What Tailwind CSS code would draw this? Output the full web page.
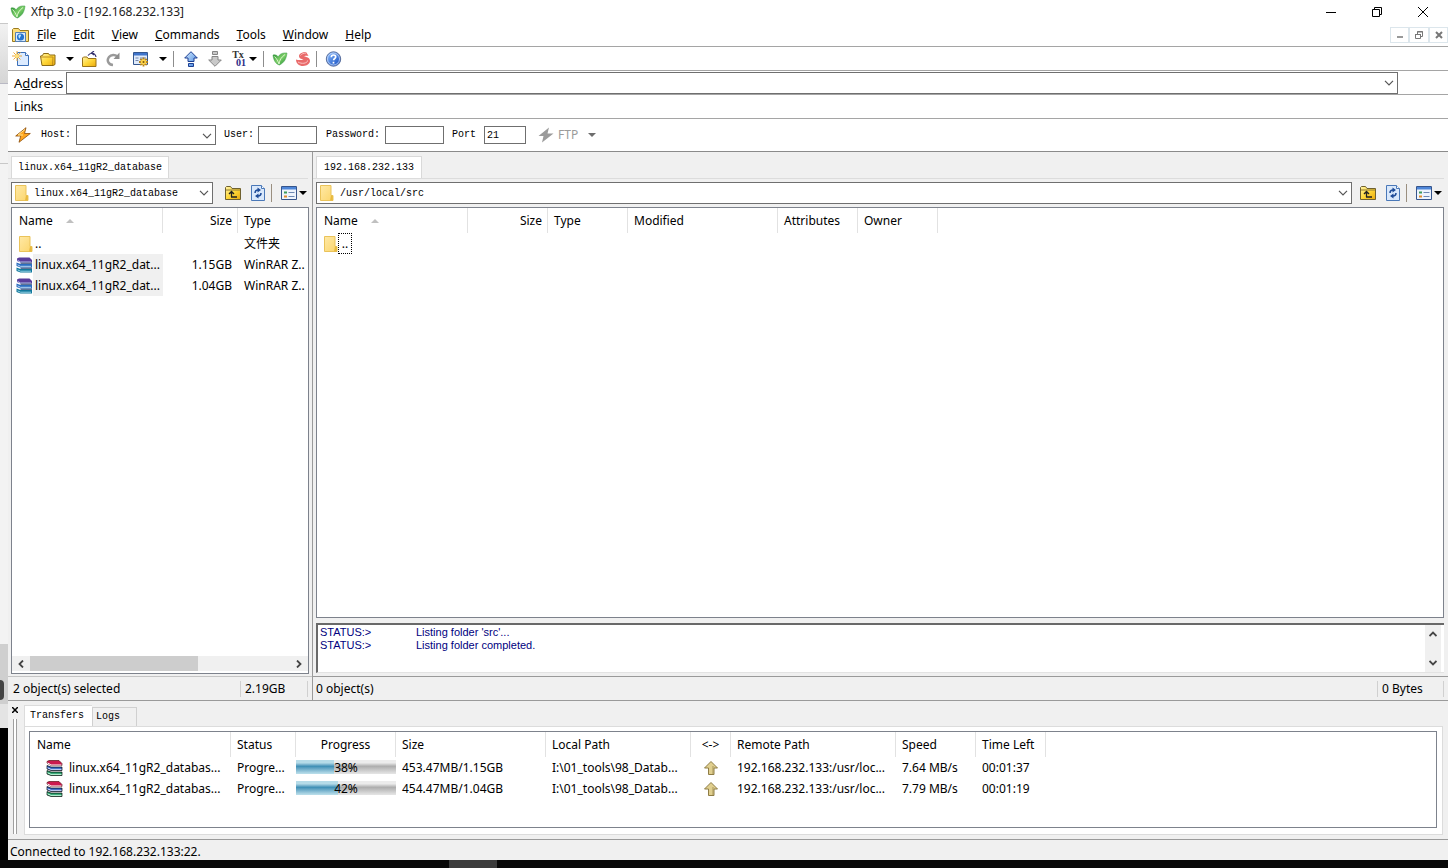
<!DOCTYPE html>
<html lang="en">
<head>
<meta charset="utf-8">
<title>Xftp 3.0 - [192.168.232.133]</title>
<script src="https://cdn.jsdelivr.net/npm/@tailwindcss/browser@4"></script>
</head>
<body class="bg-white">
<svg class="absolute h-0 w-0" aria-hidden="true">
  <defs>
    <linearGradient id="gFolder" x1="0" y1="0" x2="1" y2="1"><stop offset="0" stop-color="#fff3a8"/><stop offset=".5" stop-color="#ffd83a"/><stop offset="1" stop-color="#eaa90c"/></linearGradient>
    <linearGradient id="gPale" x1="0" y1="0" x2="1" y2="1"><stop offset="0" stop-color="#ffe9a6"/><stop offset="1" stop-color="#fbd56b"/></linearGradient>
    <linearGradient id="gBlue" x1="0" y1="0" x2="1" y2="1"><stop offset="0" stop-color="#d6ecff"/><stop offset="1" stop-color="#3f82dd"/></linearGradient>
    <linearGradient id="gLeaf" x1="0" y1="0" x2="1" y2="1"><stop offset="0" stop-color="#1f8a2c"/><stop offset=".5" stop-color="#7fd06a"/><stop offset="1" stop-color="#178a2e"/></linearGradient>
    <linearGradient id="gHelp" x1="0" y1="0" x2="1" y2="1"><stop offset="0" stop-color="#8ec0ff"/><stop offset="1" stop-color="#0d47bd"/></linearGradient>
    <symbol id="leaf" viewBox="0 0 16 16"><path d="M1 4c2-.6 4 0 5.300 2C7 3.500 10 1.500 15 2c-.6 5.500-2.500 9.500-7.500 12C3.500 13 1.500 9 1 4z" fill="url(#gLeaf)" stroke="#3c9a47" stroke-width=".5"/><path d="M7 13c.5-4 2.500-7 6-9.500M7 13C6 10 4.500 7.500 2.500 5.500" stroke="#d9f5c9" stroke-width="1" fill="none"/></symbol>
    <symbol id="chev" viewBox="0 0 10 6"><path d="M1 .8 5 4.800 9 .8" fill="none" stroke="#555" stroke-width="1.200"/></symbol>
    <symbol id="tri" viewBox="0 0 8 4"><path d="M0 0h8L4 4z" fill="currentColor"/></symbol>
    <symbol id="sort" viewBox="0 0 10 5"><path d="M5 0l5 5H0z" fill="#c0c0c0"/></symbol>
    <symbol id="pale" viewBox="0 0 14 16"><path d="M.5.500h10.500v10h2v5H.5z" fill="url(#gPale)" stroke="#eac35a"/><path d="M11 10.500l1.800.500v4.500H10z" fill="#e8b93e"/></symbol>
    <symbol id="upfolder" viewBox="0 0 16 16"><path d="M.5 14.500v-12l1-1h4l1.500 2h8.500v11z" fill="url(#gFolder)" stroke="#6f6130"/><path d="M1 5h14" stroke="#8f7a34"/><path d="M6 12h6M6.500 12V7M4 9l2.500-2.500L9 9" fill="none" stroke="#222" stroke-width="1.300"/></symbol>
    <symbol id="refresh" viewBox="0 0 14 16"><path d="M.5.500h10l3 3v12H.5z" fill="#d9e8fb" stroke="#4a78b8"/><path d="M10.500.500v3h3" fill="#fff" stroke="#4a78b8"/><path d="M6.500 2.500l3.500 2.500-3.500 2.500zM7.500 8.500l-3.500 2.500 3.500 2.500z" fill="#1d4a97"/><path d="M4 8c0-2 1-3 3-3M10 8c0 2-1 3-3 3" fill="none" stroke="#1d4a97" stroke-width="1.500"/></symbol>
    <symbol id="view" viewBox="0 0 16 14"><path d="M.5.500h15v13H.5z" fill="#eef4fd" stroke="#36558c"/><path d="M1 1h14v2.500H1z" fill="#4e86d8"/><path d="M3 5.500h3v2H3z" fill="#3c9a5a"/><path d="M3 9.500h3v2H3z" fill="#e08a2a"/><path d="M7.500 6.500h6M7.500 10.500h6" stroke="#6d88b3"/></symbol>
    <symbol id="booksBlue" viewBox="0 0 17 16"><path d="M1 1.500 3 .5h10.500L16 3v2.500H4.500L1 4z" fill="#5a3d9c"/><path d="M1.500 3.300 4.500 5H15" fill="none" stroke="#aebfe8"/><path d="M.5 5.500 4.500 7H16v3.500H4.500L.5 9z" fill="#2a6cc0"/><path d="M1.500 7.800 4.500 9.300H15" fill="none" stroke="#b4d8f2"/><path d="M.5 10.500 4.500 12H16v3.500H4.500L.5 14z" fill="#11789c"/><path d="M1.500 12.800 4.500 14.200H15" stroke="#9ad4e6" fill="none"/><path d="M4.500 6.200H16M4.500 11.200H16" stroke="#173468"/></symbol>
    <symbol id="books" viewBox="0 0 17 16"><path d="M1 1.500 3 .5h10L16 3.500v2H5L1 3z" fill="#cb1a4f" stroke="#400" stroke-width=".6"/><path d="M1.500 2.800 5 5h10.500" fill="none" stroke="#fff"/><path d="M1 5.500 5 7h11v3.500H5L1 9z" fill="#2458bb" stroke="#111" stroke-width=".7"/><path d="M1.500 7.800 5 9.300h10.500" stroke="#dfe6ff" fill="none"/><path d="M1 10.500 5 12h11v3.500H5L1 14z" fill="#1a9862" stroke="#111" stroke-width=".7"/><path d="M1.500 12.800 5 14.300h10.500" stroke="#d6ffe6" fill="none"/></symbol>
    <symbol id="goldup" viewBox="0 0 14 14"><path d="M7 .5 13.500 7H10v6.500H4.500V7H.5z" fill="#e0cf8f" stroke="#8e7c45"/><path d="M9 5v8" stroke="#a8955a"/></symbol>
    <symbol id="bolt" viewBox="0 0 16 16"><path d="M11 .5 .5 9h5L4 15.500 15.500 6.500H9.500z" fill="currentColor"/></symbol>
  </defs>
</svg>

<div class="flex min-h-screen flex-col bg-black font-['Noto_Sans','Noto_Sans_CJK_SC',sans-serif] text-xs leading-4 text-black">
 <div class="flex flex-1">
  <!-- sliver of the window behind -->
  <div class="flex w-2 shrink-0 flex-col bg-[#f3f3f3]">
    <div class="h-6 border-b border-[#c8c8c8] bg-white"></div>
    <div class="h-15 border-b border-[#b9b9c4] bg-linear-to-b from-[#f2f2f2] to-[#d5d5d5]"></div>
    <div class="h-20 border-b border-[#c8c8c8]"></div>
    <div class="flex-1"></div>
    <div class="flex h-15 items-center overflow-hidden bg-[#cfcfcf]"><span class="mt-8 h-5 w-1 rounded-r-full bg-[#444]"></span></div>
    <div class="h-6 bg-[#e4e4e4]"></div>
    <div class="h-[132px] bg-black"></div>
  </div>

  <div class="flex min-w-0 flex-1 flex-col bg-[#f0f0f0]">
   <header class="bg-white">
    <div class="flex h-[23px] items-center pl-0.5">
      <svg class="h-4 w-4"><use href="#leaf"/></svg>
      <h1 class="ml-[5px] flex-1 text-[#222]">Xftp 3.0 - [192.168.232.133]</h1>
      <button aria-label="Minimize" class="flex h-5 w-[46px] items-center justify-center"><svg class="h-2.5 w-2.5" viewBox="0 0 10 10"><path d="M0 5.500h10" stroke="#000"/></svg></button>
      <button aria-label="Restore" class="flex h-5 w-[46px] items-center justify-center"><svg class="h-2.5 w-2.5" viewBox="0 0 10 10" fill="none" stroke="#000"><path d="M.5 2.500h7v7h-7zM2.500 2.500v-2h7v7h-2"/></svg></button>
      <button aria-label="Close" class="flex h-5 w-[46px] items-center justify-center"><svg class="h-2.5 w-2.5" viewBox="0 0 10 10"><path d="M0 0l10 10M10 0L0 10" stroke="#000"/></svg></button>
      <span class="w-0.5"></span>
    </div>
    <nav class="flex h-6 items-center border-b border-[#a5a5a5] pl-1">
      <svg class="h-4 w-[17px]" viewBox="0 0 17 16"><path d="M.5 14.500v-12l1-1h5l1.500 2h8.500v11z" fill="#ffdf7a" stroke="#9a7a20"/><path d="M3.500 5.500h10v9h-10z" fill="#dcebfb" stroke="#5580b4"/><circle cx="8.500" cy="10" r="3.600" fill="#2574d0"/><path d="M6.500 8.500c1-1.500 2.500-1 2.500 0s-1.500 1.500-1 3c-1 0-1.800-1.500-1.500-3z" fill="#bfe6ff"/></svg>
      <div class="ml-2 flex flex-1 gap-[17px]">
        <button><u>F</u>ile</button><button><u>E</u>dit</button><button><u>V</u>iew</button><button><u>C</u>ommands</button><button><u>T</u>ools</button><button><u>W</u>indow</button><button><u>H</u>elp</button>
      </div>
      <div class="flex">
        <button aria-label="Minimize document" class="flex h-4 w-[19px] items-center justify-center border border-[#dce6ec]"><svg class="h-2 w-2" viewBox="0 0 8 8"><path d="M1 6h6" stroke="#777" stroke-width="1.500"/></svg></button>
        <button aria-label="Restore document" class="flex h-4 w-5 items-center justify-center border border-[#dce6ec]"><svg class="h-2 w-2" viewBox="0 0 8 8" fill="none" stroke="#777"><path d="M.5 3.500h5v4h-5zM2.500 3V.500h5v5H6M0 3.500h6M2 1h6"/></svg></button>
        <button aria-label="Close document" class="flex h-4 w-[19px] items-center justify-center border border-[#dce6ec]"><svg class="h-2 w-2" viewBox="0 0 8 8"><path d="M1 1l6 6M7 1L1 7" stroke="#777" stroke-width="2"/></svg></button>
      </div>
    </nav>

    <div class="flex h-6 items-center border-b border-[#a5a5a5] pl-1" role="toolbar" aria-label="Main">
      <button aria-label="New"><svg class="h-4 w-[17px]" viewBox="0 0 17 16"><path d="M5.500 1.500h8l3 3v10h-11z" fill="#dcebff" stroke="#3a6fb8"/><path d="M13.500 1.500v3h3" fill="#fff" stroke="#3a6fb8"/><path d="M5 0v10M0 5h10M1.500 1.500l7 7M8.500 1.500l-7 7" stroke="#eaa838"/><circle cx="5" cy="5" r="2" fill="#ffe07a"/></svg></button>
      <button aria-label="Open" class="ml-[11px]"><svg class="h-4 w-4" viewBox="0 0 16 16"><path d="M.5 5l2-.5 1-2h5l1 1.500h5.500v9.500l-2 1H2z" fill="url(#gFolder)" stroke="#8c6b16"/><path d="M1 6h12l-.5 8" fill="none" stroke="#c08e1c"/></svg></button>
      <button aria-label="Open list" class="ml-2.5"><svg class="h-1 w-2"><use href="#tri"/></svg></button>
      <button aria-label="Open session folder" class="ml-2"><svg class="h-4 w-4" viewBox="0 0 16 16"><path d="M.5 15.500V7l1-1h3.500l1 1.500h8v8z" fill="url(#gFolder)" stroke="#9a7318"/><path d="M6 4.500C8 1.500 13 1 14 6M12 0l-2.500 2L12 4" fill="none" stroke="#33306e" stroke-width="1.200"/></svg></button>
      <button aria-label="Reconnect" class="ml-2"><svg class="h-4 w-4" viewBox="0 0 16 16"><path d="M7 14C2 13.500.5 9 3 6c2-2.500 6-2.500 8.500-.5" fill="none" stroke="#9a9a9a" stroke-width="2.500"/><path d="M13.500 1.500V8H7.500z" fill="#8e8e8e"/></svg></button>
      <button aria-label="Properties" class="ml-[11px]"><svg class="h-4 w-4" viewBox="0 0 16 16"><path d="M.5 1.500h14v12H.5z" fill="#dfeafa" stroke="#34568f"/><path d="M1 2h13v2.500H1z" fill="#3f74cb"/><path d="M2.500 7h3M7 7h6M2.500 9.500h3" stroke="#7386ad"/><path d="M10.500 6.500v9M6 11h9M7.300 7.800l6.400 6.400M13.700 7.800l-6.400 6.400" stroke="#b3801a" stroke-width="1.800"/><circle cx="10.500" cy="11" r="2.700" fill="#ffd348"/><circle cx="10.500" cy="11" r="1" fill="#7a5b10"/></svg></button>
      <button aria-label="Properties list" class="ml-2.5"><svg class="h-1 w-2"><use href="#tri"/></svg></button>
      <span class="ml-1.5 h-4 w-px bg-[#8d8d8d]"></span>
      <button aria-label="Upload" class="ml-2.5"><svg class="h-4 w-3.5" viewBox="0 0 14 16"><path d="M7 .7 13.300 7H10v3.500H4V7H.7zM4.500 12.500h5v3h-5z" fill="url(#gBlue)" stroke="#1c3f93"/></svg></button>
      <button aria-label="Download" class="ml-2.5"><svg class="h-4 w-3.5" viewBox="0 0 14 16"><path d="M4.500.5h5v3h-5zM4 5.500h6V9h3.300L7 15.300.7 9H4z" fill="#c9c9c9" stroke="#858585"/></svg></button>
      <button aria-label="Transfer mode" class="ml-2 flex h-4 w-4 flex-col font-['Liberation_Serif',serif] text-[10px] leading-2 font-bold"><span class="text-[#333]">Tx</span><span class="self-end text-[#2a2a86]">01</span></button>
      <button aria-label="Transfer mode list" class="ml-[3px]"><svg class="h-1 w-2"><use href="#tri"/></svg></button>
      <span class="ml-1.5 h-4 w-px bg-[#8d8d8d]"></span>
      <button aria-label="Xftp" class="ml-2"><svg class="h-4 w-4"><use href="#leaf"/></svg></button>
      <button aria-label="Xshell" class="ml-[7px]"><svg class="h-4 w-4" viewBox="0 0 16 16"><path d="M11 1c-4 0-7 1.800-7 4.200 0 2 2 2.800 4.500 3.300C5.500 9.500 3 9 1 8.500c0 4 3 6.500 7 6.500 4.500 0 7-2.500 7-5.200C15 7 12 6 9 5.200c1.500-.7 3-.5 4.500-.5z" fill="#e96a6a"/><path d="M3 11c4 2.500 10 1 9.500-1.500M5.500 4.500C6.500 3 8.500 2 11 2" stroke="#fbc4c4" stroke-width="1" fill="none"/></svg></button>
      <span class="ml-[5px] h-4 w-px bg-[#8d8d8d]"></span>
      <button aria-label="Help" class="ml-2"><svg class="h-4 w-[17px]" viewBox="0 0 17 16"><circle cx="8.500" cy="8" r="7.200" fill="url(#gHelp)" stroke="#5a6f9c"/><circle cx="8.500" cy="8" r="6" fill="none" stroke="#dbe8ff" stroke-width=".7"/><path d="M6.300 6.200c0-3 4.600-2.800 4.400-.2-.1 1.500-2.100 1.500-2.100 3.300M8.500 10.800v1.700" stroke="#fff" stroke-width="1.700" fill="none"/></svg></button>
    </div>

    <div class="flex h-6 items-center border-b border-[#a5a5a5] pl-1.5">
      <label for="addr" class="w-[52px] text-[13px]">A<u>d</u>dress</label>
      <div class="relative mr-[50px] flex-1">
        <select id="addr" class="block h-[22px] w-full appearance-none border border-[#6f6f6f] bg-white"><option></option></select>
        <svg class="pointer-events-none absolute top-2 right-1 h-1.5 w-2.5"><use href="#chev"/></svg>
      </div>
    </div>
    <div class="flex h-6 items-center border-b border-[#a5a5a5] pl-1.5">Links</div>

    <form class="flex h-[33px] items-center border-b border-[#8b8b8b] pl-[7px] font-['Liberation_Mono',monospace] text-[10px]">
      <svg class="mr-2.5 h-4 w-4" viewBox="0 0 16 16"><path d="M11 .7.700 9h5L4 15.300 15.300 6.500H9.500z" fill="#ffa51e" stroke="#8a4a08" stroke-width=".8"/><path d="M10 2.500 3 8h5" stroke="#ffe08a" fill="none"/></svg>
      <label for="host" class="w-[35px]">Host:</label>
      <div class="relative w-[140px]">
        <select id="host" class="block h-5 w-full appearance-none border border-[#6f6f6f] bg-white"><option></option></select>
        <svg class="pointer-events-none absolute top-2 right-1 h-1.5 w-2.5"><use href="#chev"/></svg>
      </div>
      <label for="user" class="ml-2 w-[34px]">User:</label><input id="user" class="h-[18px] w-[59px] border border-[#6f6f6f] bg-white">
      <label for="pass" class="ml-[9px] w-[59px]">Password:</label><input id="pass" type="password" class="h-[18px] w-[59px] border border-[#6f6f6f] bg-white">
      <label for="port" class="ml-2 w-8">Port</label><input id="port" value="21" class="h-[18px] w-[42px] border border-[#6f6f6f] bg-white px-0.5">
      <button type="button" class="ml-3 flex items-center gap-1 font-['Noto_Sans',sans-serif] text-xs text-[#9b9b9b]"><svg class="h-4 w-4"><use href="#bolt"/></svg>FTP<svg class="ml-1.5 h-1 w-2 text-[#6d6d6d]"><use href="#tri"/></svg></button>
    </form>
   </header>

   <main class="flex flex-1 border-b border-[#9a9a9a]">
    <!-- local pane -->
    <section class="flex w-[305px] shrink-0 flex-col border-r border-[#9a9a9a]" aria-label="Local">
      <div class="mr-1 flex border-b border-[#dcdcdc] pt-1 pl-[3px]"><button class="h-[22px] border-x border-t border-[#d9d9d9] bg-white px-1.5 font-['Liberation_Mono',monospace] text-[10px]">linux.x64_11gR2_database</button></div>
      <div class="flex items-center py-[3px] pl-[3px]">
        <div class="relative w-[202px]">
          <select aria-label="Local folder" class="block h-[22px] w-full appearance-none border border-[#6f6f6f] bg-white pt-0.5 pl-[22px] font-['Liberation_Mono',monospace] text-[10px]"><option>linux.x64_11gR2_database</option></select>
          <svg class="pointer-events-none absolute top-[3px] left-1 h-4 w-3.5"><use href="#pale"/></svg>
          <svg class="pointer-events-none absolute top-2 right-1 h-1.5 w-2.5"><use href="#chev"/></svg>
        </div>
        <button aria-label="Up" class="ml-3"><svg class="h-4 w-4"><use href="#upfolder"/></svg></button>
        <button aria-label="Refresh" class="ml-2.5"><svg class="h-4 w-3.5"><use href="#refresh"/></svg></button>
        <span class="ml-1.5 h-[18px] w-px bg-[#9a8f80]"></span>
        <button aria-label="View" class="ml-[9px] flex items-center gap-0.5"><svg class="h-3.5 w-4"><use href="#view"/></svg><svg class="h-1 w-2"><use href="#tri"/></svg></button>
      </div>
      <div class="mr-[3px] ml-[3px] flex flex-1 flex-col overflow-hidden border border-[#7d828c] bg-white">
        <table class="w-full table-fixed border-separate border-spacing-0 text-left">
          <colgroup><col class="w-[151px]"><col class="w-[75px]"><col></colgroup>
          <thead><tr class="h-[25px]">
            <th class="border-r border-[#e2e2e2] pl-[7px] font-normal"><span class="flex items-center gap-3">Name<svg class="h-1 w-2.5"><use href="#sort"/></svg></span></th>
            <th class="border-r border-[#e2e2e2] pr-[5px] text-right font-normal">Size</th><th class="pl-1.5 font-normal">Type</th></tr></thead>
          <tbody class="whitespace-nowrap">
            <tr class="h-[21px]"><td><span class="flex items-center gap-0.5 pl-[7px]"><svg class="h-4 w-3.5"><use href="#pale"/></svg>..</span></td><td></td><td class="pl-1.5">文件夹</td></tr>
            <tr class="h-[21px]"><td><span class="flex items-center pl-1"><svg class="h-4 w-[17px]"><use href="#booksBlue"/></svg><span class="flex h-[21px] flex-1 items-center bg-[#f0f0f0] pl-0.5">linux.x64_11gR2_dat...</span></span></td><td class="pr-1.5 text-right">1.15GB</td><td class="pl-1.5">WinRAR Z..</td></tr>
            <tr class="h-[21px]"><td><span class="flex items-center pl-1"><svg class="h-4 w-[17px]"><use href="#booksBlue"/></svg><span class="flex h-[21px] flex-1 items-center bg-[#f0f0f0] pl-0.5">linux.x64_11gR2_dat...</span></span></td><td class="pr-1.5 text-right">1.04GB</td><td class="pl-1.5">WinRAR Z..</td></tr>
          </tbody>
        </table>
        <div class="flex-1"></div>
        <div class="mb-0.5 flex h-[15px] items-center bg-[#f0f0f0]">
          <button aria-label="Scroll left" class="flex w-[18px] justify-center"><svg class="h-2 w-1.5" viewBox="0 0 6 8"><path d="M5 .5 1.500 4 5 7.500" fill="none" stroke="#444" stroke-width="1.800"/></svg></button>
          <span class="h-[15px] w-[168px] bg-[#cdcdcd]"></span><span class="flex-1"></span>
          <button aria-label="Scroll right" class="flex w-[18px] justify-center"><svg class="h-2 w-1.5" viewBox="0 0 6 8"><path d="M1 .5 4.500 4 1 7.500" fill="none" stroke="#444" stroke-width="1.800"/></svg></button>
        </div>
      </div>
      <div class="mt-0.5 flex h-6 items-center border-t border-[#c4c4c4] pl-[5px]"><span class="flex-1">2 object(s) selected</span><span class="w-[67px] border-l border-[#d0d0d0] pl-1">2.19GB</span><span class="mr-1 h-4 w-px bg-[#d0d0d0]"></span></div>
    </section>

    <!-- remote pane -->
    <section class="flex min-w-0 flex-1 flex-col" aria-label="Remote">
      <div class="mr-1 flex border-b border-[#dcdcdc] pt-1 pl-[3px]"><button class="h-[22px] border-x border-t border-[#d9d9d9] bg-white px-[7px] font-['Liberation_Mono',monospace] text-[10px]">192.168.232.133</button></div>
      <div class="flex items-center py-[3px] pr-1.5 pl-[3px]">
        <div class="relative flex-1">
          <select aria-label="Remote folder" class="block h-[22px] w-full appearance-none border border-[#6f6f6f] bg-white pt-0.5 pl-[23px] font-['Liberation_Mono',monospace] text-[10px]"><option>/usr/local/src</option></select>
          <svg class="pointer-events-none absolute top-[3px] left-1 h-4 w-3.5"><use href="#pale"/></svg>
          <svg class="pointer-events-none absolute top-2 right-1 h-1.5 w-2.5"><use href="#chev"/></svg>
        </div>
        <button aria-label="Up" class="ml-2"><svg class="h-4 w-4"><use href="#upfolder"/></svg></button>
        <button aria-label="Refresh" class="ml-2.5"><svg class="h-4 w-3.5"><use href="#refresh"/></svg></button>
        <span class="ml-1.5 h-[18px] w-px bg-[#9a8f80]"></span>
        <button aria-label="View" class="ml-[9px] flex items-center gap-0.5"><svg class="h-3.5 w-4"><use href="#view"/></svg><svg class="h-1 w-2"><use href="#tri"/></svg></button>
      </div>
      <div class="mr-1 ml-[3px] flex-1 border border-[#7d828c] bg-white">
        <table class="w-[621px] table-fixed border-separate border-spacing-0 text-left">
          <colgroup><col class="w-[151px]"><col class="w-20"><col class="w-20"><col class="w-[150px]"><col class="w-20"><col class="w-20"></colgroup>
          <thead><tr class="h-[25px]">
            <th class="border-r border-[#e2e2e2] pl-[7px] font-normal"><span class="flex items-center gap-3">Name<svg class="h-1 w-2.5"><use href="#sort"/></svg></span></th>
            <th class="border-r border-[#e2e2e2] pr-[5px] text-right font-normal">Size</th>
            <th class="border-r border-[#e2e2e2] pl-1.5 font-normal">Type</th>
            <th class="border-r border-[#e2e2e2] pl-1.5 font-normal">Modified</th>
            <th class="border-r border-[#e2e2e2] pl-1.5 font-normal">Attributes</th>
            <th class="border-r border-[#e2e2e2] pl-1.5 font-normal">Owner</th></tr></thead>
          <tbody><tr class="h-[21px]"><td><span class="flex items-center pl-[7px]"><svg class="h-4 w-3.5"><use href="#pale"/></svg><span class="flex h-[21px] w-3.5 items-center justify-center border border-dotted border-black">..</span></span></td><td></td><td></td><td></td><td></td><td></td></tr></tbody>
        </table>
      </div>
      <div class="mt-[5px] mr-1 ml-[3px] flex h-[50px] border-t-2 border-b border-l-2 border-t-[#696969] border-b-[#e3e3e3] border-l-[#696969] bg-white font-['Liberation_Sans',sans-serif] text-[11px] leading-[13px] text-[#000080]">
        <div class="grid flex-1 grid-cols-[96px_1fr] content-start pt-px pl-0.5"><span>STATUS:&gt;</span><span>Listing folder 'src'...</span><span>STATUS:&gt;</span><span>Listing folder completed.</span></div>
        <div class="mr-[3px] flex w-4 flex-col items-center justify-between bg-[#f0f0f0] py-1.5">
          <button aria-label="Scroll up"><svg class="block h-1.5 w-2" viewBox="0 0 8 6"><path d="M.5 5 4 1.500 7.500 5" fill="none" stroke="#444" stroke-width="1.800"/></svg></button>
          <button aria-label="Scroll down"><svg class="block h-1.5 w-2" viewBox="0 0 8 6"><path d="M.5 1 4 4.500 7.500 1" fill="none" stroke="#444" stroke-width="1.800"/></svg></button>
        </div>
      </div>
      <div class="mt-[3px] flex h-6 items-center border-t border-[#9a9a9a] pl-[3px]"><span class="flex-1">0 object(s)</span><span class="w-[66px] border-l border-[#d0d0d0] pl-1">0 Bytes</span><span class="mr-1 h-4 w-px bg-[#d0d0d0]"></span></div>
    </section>
   </main>

   <section class="flex h-[139px] border-b border-[#9a9a9a]" aria-label="Transfers">
    <div class="flex w-4 flex-col items-center pt-1.5 pr-0.5 pb-[5px]">
      <button aria-label="Close panel"><svg class="block h-1.5 w-1.5" viewBox="0 0 6 6"><path d="M0 0l6 6M6 0L0 6" stroke="#000" stroke-width="1.500"/></svg></button>
      <span class="mt-1.5 w-1 flex-1 border-x border-[#a0a0a0] bg-white"></span>
    </div>
    <div class="flex min-w-0 flex-1 flex-col pt-1 pr-[5px] pb-1">
      <div class="flex items-end font-['Liberation_Mono',monospace] text-[10px]">
        <button class="h-[21px] w-[68px] border-t border-l border-[#dcdcdc] bg-white pl-[5px] text-left">Transfers</button>
        <button class="h-[19px] w-[45px] border-x border-t border-[#d0d0d0] pl-[3px] text-left">Logs</button>
      </div>
      <div class="flex flex-1 border border-[#dcdcdc] bg-white pt-1 pr-[5px] pb-1.5 pl-1">
        <div class="flex-1 border border-[#7d828c]">
          <table class="w-[1016px] table-fixed border-separate border-spacing-0 text-left">
            <colgroup><col class="w-[201px]"><col class="w-[65px]"><col class="w-[100px]"><col class="w-[150px]"><col class="w-[145px]"><col class="w-10"><col class="w-[165px]"><col class="w-20"><col class="w-[70px]"></colgroup>
            <thead><tr class="h-[25px]">
              <th class="border-r border-[#e2e2e2] pl-[7px] font-normal">Name</th>
              <th class="border-r border-[#e2e2e2] pl-1.5 font-normal">Status</th>
              <th class="border-r border-[#e2e2e2] text-center font-normal">Progress</th>
              <th class="border-r border-[#e2e2e2] pl-1.5 font-normal">Size</th>
              <th class="border-r border-[#e2e2e2] pl-1.5 font-normal">Local Path</th>
              <th class="border-r border-[#e2e2e2] text-center font-normal">&lt;-&gt;</th>
              <th class="border-r border-[#e2e2e2] pl-1.5 font-normal">Remote Path</th>
              <th class="border-r border-[#e2e2e2] pl-1.5 font-normal">Speed</th>
              <th class="border-r border-[#e2e2e2] pl-1.5 font-normal">Time Left</th></tr></thead>
            <tbody class="whitespace-nowrap">
              <tr class="h-[21px]"><td><span class="flex items-center gap-[6px] pl-4"><svg class="h-4 w-[17px]"><use href="#books"/></svg>linux.x64_11gR2_databas...</span></td><td class="pl-1.5">Progre...</td>
                <td><div role="progressbar" aria-label="Progress" aria-valuenow="38" class="relative flex h-[15px] items-center justify-center"><span class="absolute inset-x-0 top-0 h-3.5 bg-linear-to-b from-[#ececec] from-20% via-[#adadad] via-45% to-[#e2e2e2] to-95%"></span><span class="absolute top-0 left-0 h-3.5 bg-linear-to-b from-[#b5dbe8] from-20% via-[#3d8fb5] via-45% to-[#b5dbe8] to-95%" style="width:38%"></span><span class="relative">38%</span></div></td>
                <td class="pl-1.5">453.47MB/1.15GB</td><td class="pl-1.5">I:\01_tools\98_Datab...</td><td><svg class="mx-auto block h-3.5 w-3.5"><use href="#goldup"/></svg></td><td class="pl-1.5">192.168.232.133:/usr/loc...</td><td class="pl-1.5">7.64 MB/s</td><td class="pl-1.5">00:01:37</td></tr>
              <tr class="h-[21px]"><td><span class="flex items-center gap-[6px] pl-4"><svg class="h-4 w-[17px]"><use href="#books"/></svg>linux.x64_11gR2_databas...</span></td><td class="pl-1.5">Progre...</td>
                <td><div role="progressbar" aria-label="Progress" aria-valuenow="42" class="relative flex h-[15px] items-center justify-center"><span class="absolute inset-x-0 top-0 h-3.5 bg-linear-to-b from-[#ececec] from-20% via-[#adadad] via-45% to-[#e2e2e2] to-95%"></span><span class="absolute top-0 left-0 h-3.5 bg-linear-to-b from-[#b5dbe8] from-20% via-[#3d8fb5] via-45% to-[#b5dbe8] to-95%" style="width:42%"></span><span class="relative">42%</span></div></td>
                <td class="pl-1.5">454.47MB/1.04GB</td><td class="pl-1.5">I:\01_tools\98_Datab...</td><td><svg class="mx-auto block h-3.5 w-3.5"><use href="#goldup"/></svg></td><td class="pl-1.5">192.168.232.133:/usr/loc...</td><td class="pl-1.5">7.79 MB/s</td><td class="pl-1.5">00:01:19</td></tr>
            </tbody>
          </table>
        </div>
      </div>
    </div>
   </section>
   <footer class="flex h-5 items-center pt-1 pl-0.5">Connected to 192.168.232.133:22.</footer>
  </div>
 </div>
 <div class="flex h-2 bg-[#080808]"><span class="ml-[449px] w-12 bg-[#3c3c3c]"></span></div>
</div>
</body>
</html>
